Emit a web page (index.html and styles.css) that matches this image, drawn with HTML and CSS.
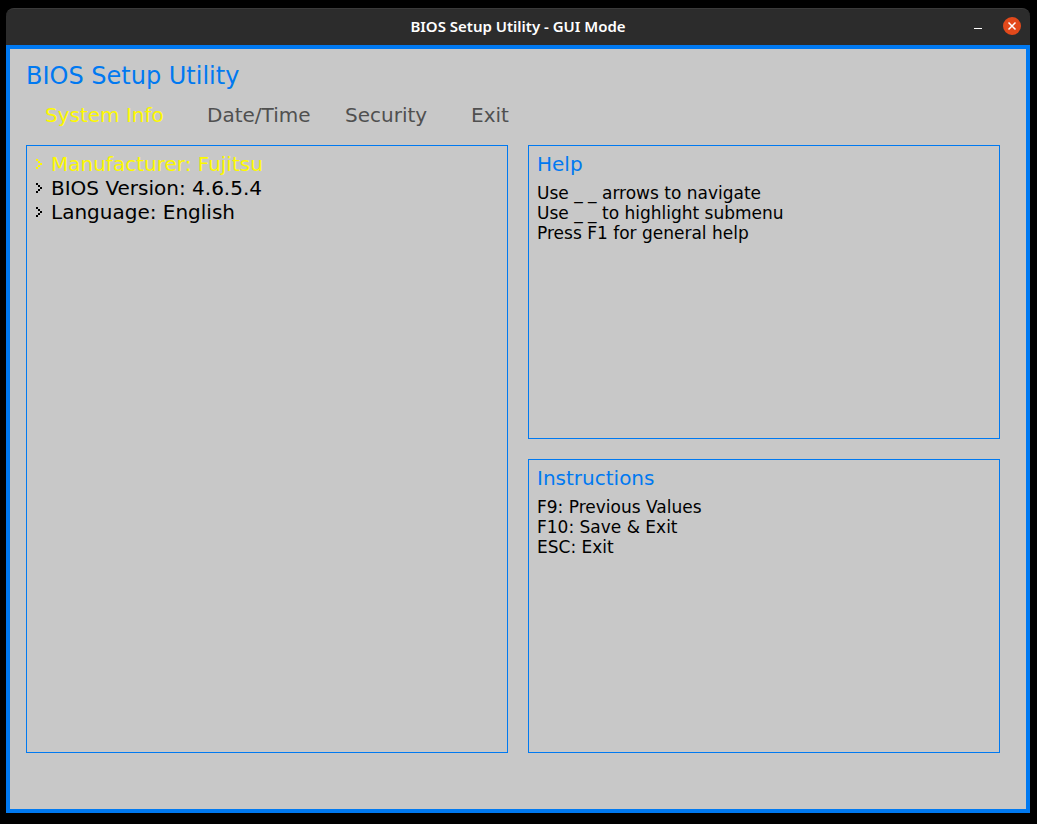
FILE: index.html
```html
<!DOCTYPE html>
<html lang="en">
<head>
<meta charset="utf-8">
<title>BIOS Setup Utility - GUI Mode</title>
<link rel="stylesheet" href="styles.css">
</head>
<body>
<div class="window">
  <header class="titlebar">
    <span class="titlebar-text">BIOS Setup Utility - GUI Mode</span>
    <div class="controls">
      <button class="control" type="button" aria-label="Minimize">
        <svg width="18" height="18" viewBox="0 0 18 18"><path d="M4 11.5h8" stroke="#fff" stroke-width="1"/></svg>
      </button>
      <button class="control" type="button" aria-label="Close">
        <svg width="18" height="18" viewBox="0 0 18 18"><circle cx="9" cy="9" r="9" fill="#e2491b"/><path d="M5.5 5.5l7 7M12.5 5.5l-7 7" stroke="#fff" stroke-width="1.5"/></svg>
      </button>
    </div>
  </header>
  <main class="screen">
    <h1 class="heading">BIOS Setup Utility</h1>
    <nav class="tabs">
      <button class="tab tab-active" type="button">System Info</button>
      <button class="tab" type="button">Date/Time</button>
      <button class="tab" type="button">Security</button>
      <button class="tab" type="button">Exit</button>
    </nav>
    <div class="panels">
      <section class="panel">
        <ul class="list">
          <li class="item item-active"><svg class="arrow" viewBox="0 0 8 12"><path d="M1 1h2v2h-2zM3 3h2v2h-2zM5 5h2v2h-2zM3 7h2v2h-2zM1 9h2v2h-2z"/></svg>Manufacturer: Fujitsu</li>
          <li class="item"><svg class="arrow" viewBox="0 0 8 12"><path d="M1 1h2v2h-2zM3 3h2v2h-2zM5 5h2v2h-2zM3 7h2v2h-2zM1 9h2v2h-2z"/></svg>BIOS Version: 4.6.5.4</li>
          <li class="item"><svg class="arrow" viewBox="0 0 8 12"><path d="M1 1h2v2h-2zM3 3h2v2h-2zM5 5h2v2h-2zM3 7h2v2h-2zM1 9h2v2h-2z"/></svg>Language: English</li>
        </ul>
      </section>
      <div class="side">
        <section class="panel">
          <h2 class="panel-title">Help</h2>
          <p class="line">Use _ _ arrows to navigate</p>
          <p class="line">Use _ _ to highlight submenu</p>
          <p class="line">Press F1 for general help</p>
        </section>
        <section class="panel">
          <h2 class="panel-title">Instructions</h2>
          <p class="line">F9: Previous Values</p>
          <p class="line">F10: Save &amp; Exit</p>
          <p class="line">ESC: Exit</p>
        </section>
      </div>
    </div>
  </main>
</div>
</body>
</html>
```
FILE: styles.css
```css
* { box-sizing: border-box; }
body {
  margin: 0;
  background: #000;
  font-family: "DejaVu Sans", sans-serif;
}
.window {
  display: flex;
  flex-direction: column;
  height: 100vh;
  padding: 8px 7px 11px 6px;
}
.titlebar {
  display: grid;
  grid-template-columns: 1fr auto 1fr;
  align-items: center;
  height: 37px;
  padding: 0 9px 2px;
  background: #2c2c2c;
  border-top: 1px solid #3a3a3a;
  border-radius: 8px 8px 0 0;
}
.titlebar-text {
  grid-column: 2;
  color: #fff;
  font: 600 15px "Noto Sans", sans-serif;
}
.controls {
  display: flex;
  justify-content: flex-end;
  gap: 15px;
}
.control {
  width: 18px;
  height: 18px;
  padding: 0;
  border: 0;
  background: none;
}
.control svg { display: block; }
.screen {
  flex: 1;
  display: flex;
  flex-direction: column;
  padding: 12px 26px 56px 16px;
  background: #c8c8c8;
  border: 4px solid #0079f1;
}
.heading {
  margin: 0;
  color: #0079f1;
  font-size: 24px;
  font-weight: normal;
  line-height: 30px;
}
.tabs {
  display: grid;
  grid-template-columns: 162px 138px 126px auto;
  justify-content: start;
  margin: 12px 0 18px;
  padding-left: 19px;
}
.tab {
  padding: 0;
  border: 0;
  background: none;
  color: #505050;
  font: 20px/24px "DejaVu Sans", sans-serif;
  text-align: left;
}
.tab-active { color: #fdf900; }
.panels {
  flex: 1;
  display: grid;
  grid-template-columns: 482fr 472fr;
  gap: 20px;
}
.side {
  display: grid;
  grid-template-rows: 1fr 1fr;
  gap: 20px;
}
.panel {
  padding: 6px 8px;
  border: 1px solid #0079f1;
}
.list {
  margin: 0;
  padding: 0;
  list-style: none;
}
.item {
  display: flex;
  align-items: center;
  gap: 8px;
  font-size: 20px;
  line-height: 24px;
}
.item-active { color: #fdf900; }
.arrow {
  width: 8px;
  height: 12px;
  fill: currentColor;
}
.panel-title {
  margin: 0 0 7px;
  color: #0079f1;
  font-size: 20px;
  font-weight: normal;
  line-height: 24px;
}
.line {
  margin: 0;
  font-size: 17px;
  line-height: 20px;
}
```
